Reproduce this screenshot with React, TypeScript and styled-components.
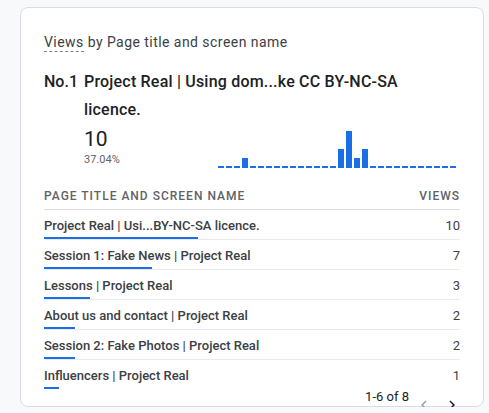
import React from "react";
import styled, { createGlobalStyle } from "styled-components";

const GlobalStyle = createGlobalStyle`
  html, body { margin: 0; padding: 0; background: #f8f9fa; }
  body { font-family: Roboto, "Noto Sans", Arial, sans-serif; color: #202124; }
  * { box-sizing: border-box; }
`;

const Page = styled.div`
  padding: 7px 5px 0 20px;
`;

const Card = styled.div`
  width: 464px;
  height: 400px;
  background: #fff;
  border: 1px solid #dadce0;
  border-radius: 8px;
  padding: 24px 23px 0 23px;
`;

const Title = styled.div`
  font-size: 14px;
  line-height: 20px;
  letter-spacing: 0.45px;
  color: #3c4043;
  font-weight: 400;
`;

const Dashed = styled.span`
  border-bottom: 1px dashed #80868b;
  padding-bottom: 1px;
`;

const TopItem = styled.div`
  margin-top: 16px;
  display: grid;
  grid-template-columns: 40px 1fr;
`;

const Rank = styled.div`
  font-size: 16px;
  line-height: 28px;
  color: #202124;
  font-weight: 500;
`;

const TopName = styled.div`
  max-width: 330px;
  font-size: 16px;
  line-height: 28px;
  letter-spacing: 0.2px;
  color: #202124;
  font-weight: 500;
`;

const Stats = styled.div`
  display: flex;
  align-items: flex-end;
  margin-top: 3px;
`;

const ValueBlock = styled.div`
  width: 134px;
  display: flex;
  flex-direction: column;
`;

const BigValue = styled.div`
  font-size: 21px;
  line-height: 24px;
  color: #202124;
`;

const Percent = styled.div`
  font-size: 11px;
  line-height: 14px;
  color: #5f6368;
  margin-top: 2px;
`;

const Chart = styled.div`
  display: flex;
  align-items: flex-end;
  gap: 2px;
  height: 40px;
  margin-bottom: -1px;
`;

const ChartBar = styled.div<{ $h: number }>`
  width: 6px;
  height: ${(p) => p.$h}px;
  background: #1a6ee6;
`;

const HeaderRow = styled.div`
  margin-top: 21px;
  display: flex;
  justify-content: space-between;
  font-size: 12px;
  line-height: 16px;
  font-weight: 500;
  letter-spacing: 1px;
  color: #5f6368;
  text-transform: uppercase;
  padding-bottom: 5px;
  border-bottom: 1px solid #dadce0;
`;

const Row = styled.div<{ $last?: boolean }>`
  padding-top: 8px;
  border-bottom: 1px solid ${(p) => (p.$last ? "transparent" : "#e8eaed")};
`;

const RowLine = styled.div`
  display: flex;
  justify-content: space-between;
  font-size: 13px;
  line-height: 16px;
  color: #3c4043;
  font-weight: 500;
`;

const RowValue = styled.span`
  font-weight: 400;
`;

const RowBar = styled.div`
  margin-top: 3px;
  height: 2px;
  background: #1a6ee6;
`;

const Pagination = styled.div`
  display: flex;
  justify-content: flex-end;
  align-items: flex-start;
  margin-top: -1px;
  margin-right: -6px;
`;

const PageText = styled.div`
  font-size: 13px;
  line-height: 16px;
  color: #202124;
  margin-right: 1px;
`;

const IconButton = styled.button<{ $disabled?: boolean }>`
  width: 28px;
  height: 24px;
  margin-top: 4px;
  padding: 0;
  border: none;
  background: transparent;
  display: flex;
  align-items: center;
  justify-content: center;
  color: ${(p) => (p.$disabled ? "#9aa0a6" : "#202124")};
`;

const rows = [
  { name: "Project Real | Usi...BY-NC-SA licence.", value: 10 },
  { name: "Session 1: Fake News | Project Real", value: 7 },
  { name: "Lessons | Project Real", value: 3 },
  { name: "About us and contact | Project Real", value: 2 },
  { name: "Session 2: Fake Photos | Project Real", value: 2 },
  { name: "Influencers | Project Real", value: 1 },
];

const total = 27;

const series: number[] = Array.from({ length: 30 }, () => 0);
series[3] = 1;
series[15] = 2;
series[16] = 4;
series[17] = 1;
series[18] = 2;

const ChevronLeft = () => (
  <svg width="18" height="18" viewBox="0 0 24 24" fill="currentColor">
    <path d="M15.41 7.41L14 6l-6 6 6 6 1.41-1.41L10.83 12z" />
  </svg>
);

const ChevronRight = () => (
  <svg width="18" height="18" viewBox="0 0 24 24" fill="currentColor">
    <path d="M8.59 16.59L10 18l6-6-6-6-1.41 1.41L13.17 12z" />
  </svg>
);

export default function App() {
  return (
    <>
      <GlobalStyle />
      <Page>
        <Card>
          <Title>
            <Dashed>Views</Dashed> by Page title and screen name
          </Title>
          <TopItem>
            <Rank>No.1</Rank>
            <div>
              <TopName>Project Real | Using dom...ke CC BY-NC-SA licence.</TopName>
              <Stats>
                <ValueBlock>
                  <BigValue>10</BigValue>
                  <Percent>37.04%</Percent>
                </ValueBlock>
                <Chart>
                  {series.map((v, i) => (
                    <ChartBar key={i} $h={v === 0 ? 2 : v * 9 + 1} />
                  ))}
                </Chart>
              </Stats>
            </div>
          </TopItem>
          <HeaderRow>
            <span>Page title and screen name</span>
            <span>Views</span>
          </HeaderRow>
          {rows.map((r, i) => (
            <Row key={i} $last={i === rows.length - 1}>
              <RowLine>
                <span>{r.name}</span>
                <RowValue>{r.value}</RowValue>
              </RowLine>
              <RowBar style={{ width: `${(r.value / total) * 100}%` }} />
            </Row>
          ))}
          <Pagination>
            <PageText>1-6 of 8</PageText>
            <IconButton $disabled aria-label="Previous">
              <ChevronLeft />
            </IconButton>
            <IconButton aria-label="Next">
              <ChevronRight />
            </IconButton>
          </Pagination>
        </Card>
      </Page>
    </>
  );
}
